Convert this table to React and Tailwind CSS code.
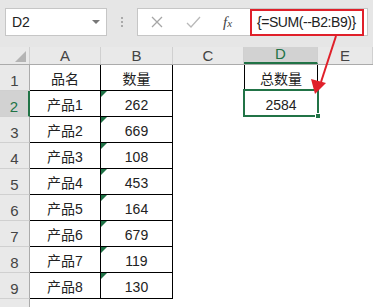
import React from 'react';

const rows = [
  ['品名', '数量'],
  ['产品1', '262'],
  ['产品2', '669'],
  ['产品3', '108'],
  ['产品4', '453'],
  ['产品5', '164'],
  ['产品6', '679'],
  ['产品7', '119'],
  ['产品8', '130'],
];

const font = "font-['Liberation_Sans','Noto_Sans_CJK_SC',sans-serif]";

function ColHeader({ label, width, active }) {
  return (
    <div
      className={`${width} h-full flex items-end justify-center pb-[1px] border-r border-[#d0d0d0] text-[15px] leading-none ${
        active ? 'bg-[#d2d2d2] text-[#217346] border-b-2 border-b-[#217346]' : 'text-[#444]'
      }`}
    >
      {label}
    </div>
  );
}

function RowHeader({ n, active }) {
  return (
    <div
      className={`w-[30px] shrink-0 h-full flex items-end justify-center pb-[2px] border-b border-[#d0d0d0] text-[15px] leading-none ${
        active
          ? 'bg-[#d2d2d2] text-[#217346] border-r-2 border-r-[#217346]'
          : 'bg-[#e9e9e9] text-[#444] border-r border-r-[#ababab]'
      }`}
    >
      {n}
    </div>
  );
}

function Cell({ children, className = '', flag }) {
  return (
    <div
      className={`relative h-full flex items-end justify-center pb-[4px] text-[14px] leading-none text-[#222] ${className}`}
    >
      {flag && (
        <span className="absolute left-0 top-0 w-0 h-0 border-t-[6px] border-t-[#1e7145] border-r-[6px] border-r-transparent" />
      )}
      {children}
    </div>
  );
}

export default function App() {
  return (
    <div className={`relative w-[373px] h-[307px] overflow-hidden bg-white ${font}`}>
      {/* name box + formula bar */}
      <div className="h-[47px] bg-[#e6e6e6] flex items-start pt-[8px]">
        <div className="ml-[5px] w-[102px] h-[28px] bg-white border border-[#c6c6c6] flex items-center justify-between pl-[6px] pr-[6px]">
          <span className="text-[14px] text-[#222]">D2</span>
          <span className="w-0 h-0 border-l-[4px] border-r-[4px] border-t-[4px] border-l-transparent border-r-transparent border-t-[#777]" />
        </div>
        <div className="w-[30px] h-[28px] flex flex-col items-center justify-center gap-[2px]">
          <span className="w-[2px] h-[2px] bg-[#aaa]" />
          <span className="w-[2px] h-[2px] bg-[#aaa]" />
          <span className="w-[2px] h-[2px] bg-[#aaa]" />
        </div>
        <div className="w-[231px] h-[28px] bg-white border border-[#c6c6c6] flex items-center">
          <div className="w-[107px] h-full flex items-center">
            <svg width="12" height="12" viewBox="0 0 12 12" className="ml-[13px]">
              <path d="M1 1L11 11M11 1L1 11" stroke="#a6a6a6" strokeWidth="1.3" fill="none" />
            </svg>
            <svg width="15" height="12" viewBox="0 0 15 12" className="ml-[23px]">
              <path d="M1 7L5 11L14 1" stroke="#b9b9b9" strokeWidth="1.3" fill="none" />
            </svg>
            <span className="ml-[22px] font-['Liberation_Serif',serif] italic text-[15px] text-[#444] leading-none">
              f<span className="text-[11px]">x</span>
            </span>
          </div>
          <div className="ml-[5px] w-[114px] h-[27px] border-2 border-[#e0202a] flex items-center pl-[5px] text-[14px] tracking-[-0.45px] text-[#222] whitespace-nowrap">
            {'{=SUM(--B2:B9)}'}
          </div>
        </div>
      </div>

      {/* column headers */}
      <div className="h-[18px] flex bg-[#e9e9e9] border-b border-[#ababab]">
        <div className="w-[30px] shrink-0 h-full border-r border-[#d0d0d0] relative">
          <span className="absolute right-[3px] bottom-[2px] w-0 h-0 border-l-[11px] border-l-transparent border-b-[11px] border-b-[#b4b4b4]" />
        </div>
        <ColHeader label="A" width="w-[71px]" />
        <ColHeader label="B" width="w-[72px]" />
        <ColHeader label="C" width="w-[71px]" />
        <ColHeader label="D" width="w-[74px]" active />
        <ColHeader label="E" width="flex-1" />
      </div>

      {/* rows */}
      {rows.map(([name, qty], i) => (
        <div key={i} className="h-[26px] flex">
          <RowHeader n={i + 1} active={i === 1} />
          <Cell className="w-[71px] border-r border-b border-black">{name}</Cell>
          <Cell className="w-[72px] border-r border-b border-black" flag={i > 0}>
            {qty}
          </Cell>
          <Cell className="w-[71px]" />
          {i === 0 && (
            <Cell className="w-[74px] border-l border-r border-b border-black">总数量</Cell>
          )}
          {i === 1 && (
            <Cell className="w-[74px] border-l border-r border-b border-black">
              <span className="absolute -left-[2px] -top-[2px] -right-[2px] -bottom-[1px] border-2 border-[#217346]" />
              <span className="absolute -right-[4px] -bottom-[3px] w-[6px] h-[6px] bg-[#217346] border border-white" />
              2584
            </Cell>
          )}
          {i > 1 && <Cell className="w-[74px]" />}
          <Cell className="flex-1" />
        </div>
      ))}
      {/* row 10 only peeks in at the bottom edge */}
      <div className="h-[26px] flex">
        <RowHeader n="" />
      </div>

      {/* callout arrow from the formula to the result cell */}
      <svg className="absolute inset-0 pointer-events-none" width="373" height="307">
        <line x1="336" y1="36" x2="321" y2="82" stroke="#e0202a" strokeWidth="2" />
        <polygon points="315,94 311,79 326,83" fill="#e0202a" />
      </svg>
    </div>
  );
}
